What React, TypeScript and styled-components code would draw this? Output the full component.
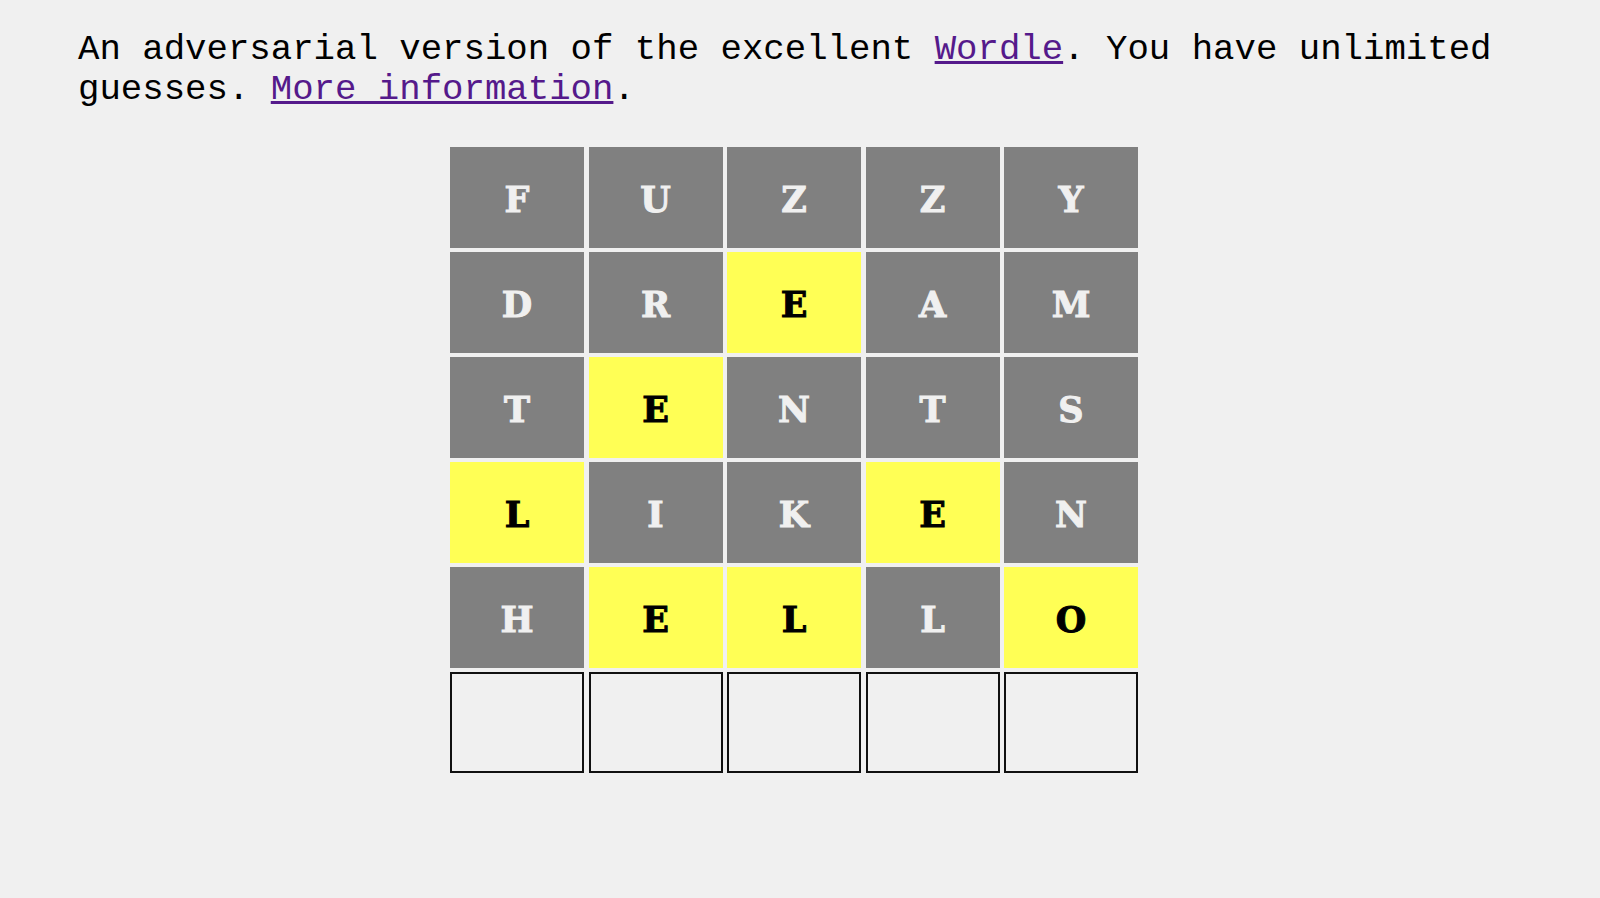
import React from 'react';
import styled, {createGlobalStyle} from "styled-components";

type TileState = 'absent' | 'present' | 'empty';

const GlobalStyle = createGlobalStyle`
  html, body {
    margin: 0;
    background: #f0f0f0;
  }
`;

const Page = styled.main`
  padding: 30px 90px 0 78px;
  min-height: 898px;
  box-sizing: border-box;
`;

const Intro = styled.p`
  margin: 0;
  font-family: "Liberation Mono", "Courier New", monospace;
  font-size: 35.7px;
  line-height: 40px;
  color: #000;

  a {
    color: #551a8b;
    text-decoration: underline;
  }
`;

const Board = styled.div`
  margin-top: 37px;
  display: grid;
  grid-template-columns: repeat(5, 134px);
  grid-auto-rows: 101px;
  column-gap: 4.5px;
  row-gap: 4px;
  justify-content: center;
`;

const Tile = styled.div<{ $state: TileState }>`
  box-sizing: border-box;
  display: flex;
  align-items: center;
  justify-content: center;
  padding-top: 4px;
  font-family: "DejaVu Serif", "Liberation Serif", serif;
  font-weight: bold;
  font-size: 35px;
  -webkit-text-stroke: 1px currentColor;
  background: ${p => p.$state === 'absent' ? '#808080' : p.$state === 'present' ? '#ffff55' : 'transparent'};
  color: ${p => p.$state === 'absent' ? '#f0f0f0' : '#000'};
  border: ${p => p.$state === 'empty' ? '2px solid #111' : 'none'};
`;

// x = grey, p = yellow
const guesses: [string, string][] = [
    ['FUZZY', 'xxxxx'],
    ['DREAM', 'xxpxx'],
    ['TENTS', 'xpxxx'],
    ['LIKEN', 'pxxpx'],
    ['HELLO', 'xppxp'],
];

const App = () => {
    return (
        <Page>
            <GlobalStyle/>
            <Intro>
                An adversarial version of the excellent <a href="#">Wordle</a>. You have unlimited
                guesses. <a href="#">More information</a>.
            </Intro>
            <Board>
                {guesses.map(([word, marks], r) =>
                    word.split('').map((ch, i) => (
                        <Tile key={`${r}-${i}`} $state={marks[i] === 'p' ? 'present' : 'absent'}>
                            {ch}
                        </Tile>
                    ))
                )}
                {[0, 1, 2, 3, 4].map(i => <Tile key={`e-${i}`} $state="empty"/>)}
            </Board>
        </Page>
    );
};

export default App;
